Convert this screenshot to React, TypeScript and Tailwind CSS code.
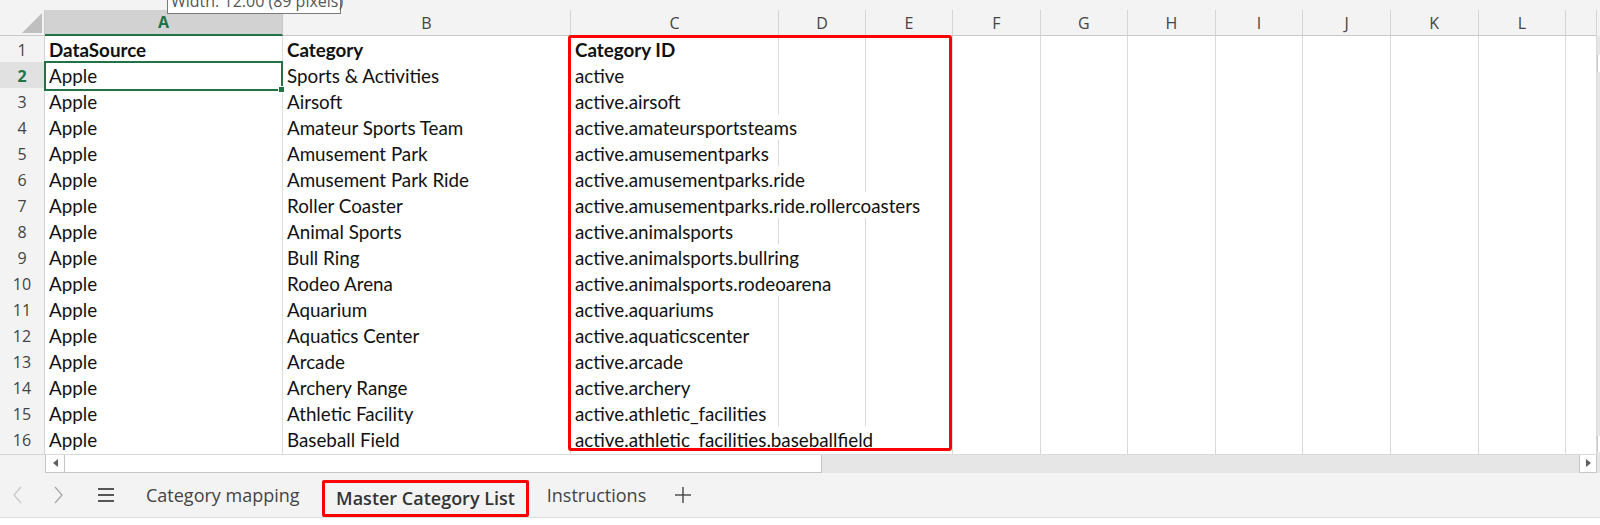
import React from 'react';

// Sheet column template: row header, A, B, C, D, E, F-L, partial M
const GRID = 'grid grid-cols-[45px_238px_288px_208px_87px_87px_repeat(7,87.6px)_1fr]';

const SPAN: Record<number, string> = {
  1: 'col-span-1',
  2: 'col-span-2',
  3: 'col-span-3',
};

const COLUMNS = ['A', 'B', 'C', 'D', 'E', 'F', 'G', 'H', 'I', 'J', 'K', 'L', ''];

type Row = [string, string, string, number];

// [source, category, id, how many columns the id text runs across]
const rows: Row[] = [
  ['DataSource', 'Category', 'Category ID', 1],
  ['Apple', 'Sports & Activities', 'active', 1],
  ['Apple', 'Airsoft', 'active.airsoft', 1],
  ['Apple', 'Amateur Sports Team', 'active.amateursportsteams', 2],
  ['Apple', 'Amusement Park', 'active.amusementparks', 1],
  ['Apple', 'Amusement Park Ride', 'active.amusementparks.ride', 2],
  ['Apple', 'Roller Coaster', 'active.amusementparks.ride.rollercoasters', 3],
  ['Apple', 'Animal Sports', 'active.animalsports', 1],
  ['Apple', 'Bull Ring', 'active.animalsports.bullring', 2],
  ['Apple', 'Rodeo Arena', 'active.animalsports.rodeoarena', 2],
  ['Apple', 'Aquarium', 'active.aquariums', 1],
  ['Apple', 'Aquatics Center', 'active.aquaticscenter', 1],
  ['Apple', 'Arcade', 'active.arcade', 1],
  ['Apple', 'Archery Range', 'active.archery', 1],
  ['Apple', 'Athletic Facility', 'active.athletic_facilities', 1],
  ['Apple', 'Baseball Field', 'active.athletic_facilities.baseballfield', 3],
];

const cell = 'flex items-center bg-white border-r border-b border-[#dadada] px-[4px] whitespace-nowrap';

const ColumnHeader: React.FC = () => (
  <div className={`${GRID} h-[26px] font-['Open_Sans',sans-serif] text-[16px]`}>
    <div className="flex items-end justify-end bg-[#f3f3f3] border-r border-b border-[#c8c8c8] pr-[2px] pb-[2px]">
      <svg width="20" height="20" viewBox="0 0 20 20">
        <polygon points="20,0 20,20 0,20" fill="#bfbfbf" />
      </svg>
    </div>
    {COLUMNS.map((c) =>
      c === 'A' ? (
        <div
          key={c}
          className="flex items-center justify-center bg-[#d2d2d2] border-r border-[#c8c8c8] border-b-2 border-b-[#217346] font-bold text-[#217346]"
        >
          {c}
        </div>
      ) : (
        <div
          key={c || 'blank'}
          className="flex items-center justify-center bg-[#f3f3f3] border-r border-b border-[#d4d4d4] border-b-[#c8c8c8] text-[#444]"
        >
          {c}
        </div>
      )
    )}
  </div>
);

const SheetRow: React.FC<{ row: Row; index: number }> = ({ row, index }) => {
  const [source, category, id, span] = row;
  const num = index + 1;
  const isHeader = index === 0;
  const isSelected = num === 2;
  const rest = 10 - (span - 1);

  return (
    <div className={`${GRID} h-[26px]`}>
      <div
        className={
          isSelected
            ? "flex items-center justify-center bg-[#e1e1e1] border-r border-b border-[#d4d4d4] font-['Open_Sans',sans-serif] text-[16px] font-bold text-[#217346]"
            : "flex items-center justify-center bg-[#f3f3f3] border-r border-b border-[#d4d4d4] font-['Open_Sans',sans-serif] text-[16px] text-[#444]"
        }
      >
        {num}
      </div>
      <div className={`${cell} relative ${isHeader ? 'font-bold' : ''}`}>
        {source}
        {isSelected && (
          <div className="absolute -left-[1px] -top-[1px] -right-[1px] -bottom-[1px] border-2 border-[#217346] z-10">
            <div className="absolute -right-[4px] -bottom-[4px] w-[7px] h-[7px] bg-[#217346] border border-white" />
          </div>
        )}
      </div>
      <div className={`${cell} ${isHeader ? 'font-bold' : ''}`}>{category}</div>
      <div className={`${cell} ${SPAN[span]} ${isHeader ? 'font-bold' : ''}`}>{id}</div>
      {Array.from({ length: rest }).map((_, i) => (
        <div key={i} className={cell} />
      ))}
    </div>
  );
};

const HScrollBar: React.FC = () => (
  <div className="flex h-[21px] bg-[#f3f3f3]">
    <div className="w-[45px]" />
    <div className="w-[20px] flex items-center justify-center bg-white border border-[#c6c6c6]">
      <svg width="5" height="8" viewBox="0 0 5 8">
        <polygon points="5,0 5,8 0,4" fill="#606060" />
      </svg>
    </div>
    <div className="w-[757px] bg-white border-y border-r border-[#c6c6c6]" />
    <div className="flex-1 bg-[#e6e6e6]" />
    <div className="w-[18px] flex items-center justify-center bg-white border border-[#c6c6c6]">
      <svg width="5" height="8" viewBox="0 0 5 8">
        <polygon points="0,0 0,8 5,4" fill="#606060" />
      </svg>
    </div>
    <div className="w-[3px] bg-[#e6e6e6]" />
  </div>
);

const SheetTabs: React.FC = () => (
  <div className="flex h-[45px] bg-[#f3f3f3] border-b border-[#dcdcdc] font-['Open_Sans',sans-serif] text-[18px] text-[#444]">
    <div className="w-[36px] flex items-center justify-center">
      <svg width="10" height="18" viewBox="0 0 10 18" fill="none" stroke="#c8c8c8" strokeWidth="1.3">
        <polyline points="8,1 1,9 8,17" />
      </svg>
    </div>
    <div className="w-[44px] flex items-center justify-center">
      <svg width="10" height="18" viewBox="0 0 10 18" fill="none" stroke="#a8a8a8" strokeWidth="1.3">
        <polyline points="2,1 9,9 2,17" />
      </svg>
    </div>
    <div className="w-[52px] flex items-center justify-center">
      <svg width="16" height="14" viewBox="0 0 16 14" stroke="#444" strokeWidth="1.8">
        <line x1="0" y1="1" x2="16" y2="1" />
        <line x1="0" y1="7" x2="16" y2="7" />
        <line x1="0" y1="13" x2="16" y2="13" />
      </svg>
    </div>
    <div className="w-[190px] flex items-center pl-[14px]">Category mapping</div>
    <div className="w-[207px] mt-[7px] h-[37px] flex items-center justify-center border-[3px] border-[#ff0000] rounded-[2px] font-semibold text-[#333]">
      Master Category List
    </div>
    <div className="w-[135px] flex items-center justify-center">Instructions</div>
    <div className="w-[38px] flex items-center justify-center">
      <svg width="16" height="16" viewBox="0 0 16 16" stroke="#444" strokeWidth="1.4">
        <line x1="8" y1="0" x2="8" y2="16" />
        <line x1="0" y1="8" x2="16" y2="8" />
      </svg>
    </div>
  </div>
);

export default function App() {
  return (
    <div className="w-[1600px] h-[525px] overflow-hidden bg-white font-['Lato',sans-serif] text-[18.8px] text-[#111]">
      {/* formula bar edge with the column width tip */}
      <div className="relative h-[10px] bg-[#f3f3f3]">
        <div className="absolute left-[167px] -top-[13px] w-[174px] h-[27px] bg-white border border-[#7a7a7a] px-[3px] font-['Open_Sans',sans-serif] text-[16px] leading-[27px] text-[#555] whitespace-nowrap z-20">
          Width: 12.00 (89 pixels)
        </div>
      </div>

      <div className="flex">
        <div className="relative flex-1">
          <ColumnHeader />
          {rows.map((row, i) => (
            <SheetRow key={i} row={row} index={i} />
          ))}
          <div className="absolute left-[568px] top-[25px] w-[384px] h-[416px] border-[3px] border-[#ff0000] rounded-[3px] pointer-events-none z-20" />
        </div>
        <div className="w-[3px] flex flex-col">
          <div className="h-[26px] bg-[#f3f3f3]" />
          <div className="h-[19px] bg-[#e6e6e6]" />
          <div className="h-[17px] bg-white border-l border-[#c6c6c6]" />
          <div className="flex-1 bg-[#e6e6e6]" />
          <div className="h-[16px] bg-white border-l border-[#c6c6c6]" />
        </div>
      </div>

      <HScrollBar />
      <SheetTabs />
    </div>
  );
}
